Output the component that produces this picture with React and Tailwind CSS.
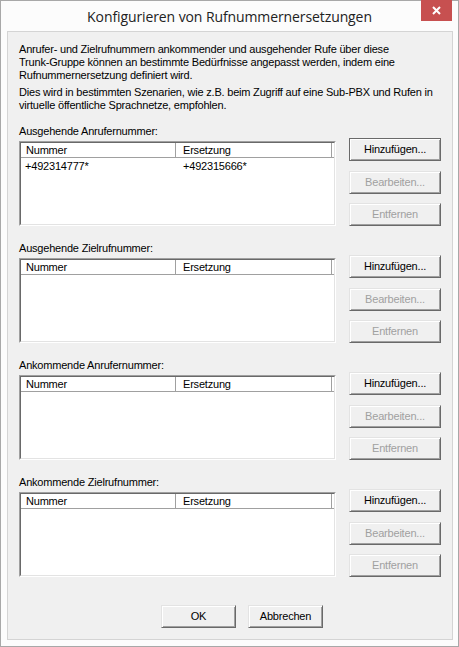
import clsx from 'clsx';

const sections = [
  {
    label: 'Ausgehende Anrufernummer:',
    rows: [{ nummer: '+492314777*', ersetzung: '+492315666*' }],
    isDefault: true,
  },
  { label: 'Ausgehende Zielrufnummer:', rows: [] },
  { label: 'Ankommende Anrufernummer:', rows: [] },
  { label: 'Ankommende Zielrufnummer:', rows: [] },
];

// Classic 3D push button
function DialogButton({ children, disabled, isDefault, className }) {
  return (
    <button
      type="button"
      disabled={disabled}
      className={clsx(
        'h-[23px] bg-[#f0f0f0] text-[11px] leading-none tracking-[-0.2px] border',
        isDefault
          ? 'border-[#6a6a6a] shadow-[inset_1px_1px_0_#ffffff,inset_-1px_-1px_0_#a0a0a0]'
          : 'border-t-[#e3e3e3] border-l-[#e3e3e3] border-r-[#696969] border-b-[#696969] shadow-[inset_1px_1px_0_#ffffff,inset_-1px_-1px_0_#a0a0a0]',
        disabled ? 'text-[#a0a0a0]' : 'text-black',
        className
      )}
    >
      {children}
    </button>
  );
}

// Two-column report list with sunken frame
function NumberList({ rows }) {
  return (
    <div className="w-[317px] h-[85px] border border-t-[#a0a0a0] border-l-[#a0a0a0] border-r-white border-b-white">
      <div className="h-full bg-white border border-t-[#696969] border-l-[#696969] border-r-[#e3e3e3] border-b-[#e3e3e3]">
        <div className="flex h-[15px] border-b border-[#a0a0a0] leading-[14px]">
          <div className="w-[155px] pl-[5px] border-r border-[#a0a0a0]">Nummer</div>
          <div className="w-[156px] pl-[7px] border-r border-[#a0a0a0]">Ersetzung</div>
        </div>
        {rows.map((row) => (
          <div key={row.nummer} className="flex h-[17px] items-center">
            <div className="w-[155px] pl-[4px]">{row.nummer}</div>
            <div className="w-[156px] pl-[7px]">{row.ersetzung}</div>
          </div>
        ))}
      </div>
    </div>
  );
}

export default function App() {
  return (
    <div className="relative w-[459px] h-[647px] bg-[#fcfcfc] border border-[#a8a8a8] font-['Liberation_Sans',Arial,sans-serif] text-[11px] text-black">
      {/* title bar */}
      <div className="h-[30px] flex items-center justify-center">
        <span className="font-['Open_Sans',sans-serif] text-[14px] text-[#222222] tracking-[-0.1px]">
          Konfigurieren von Rufnummernersetzungen
        </span>
      </div>
      <div className="absolute top-[-1px] right-[6px] w-[31px] h-[21px] bg-[#c75050] flex items-center justify-center">
        <svg width="9" height="9" viewBox="0 0 9 9">
          <path d="M1 1 L8 8 M8 1 L1 8" stroke="#ffffff" strokeWidth="2" />
        </svg>
      </div>

      {/* client area */}
      <div className="ml-[6px] w-[446px] h-[609px] bg-[#f0f0f0] border border-[#d4d4d4] pl-[11px] pt-[11px] tracking-[-0.2px]">
        <div className="leading-[13px] whitespace-nowrap">
          <div>Anrufer- und Zielrufnummern ankommender und ausgehender Rufe über diese</div>
          <div>Trunk-Gruppe können an bestimmte Bedürfnisse angepasst werden, indem eine</div>
          <div>Rufnummernersetzung definiert wird.</div>
        </div>
        <div className="mt-[4px] leading-[13px] whitespace-nowrap">
          <div>Dies wird in bestimmten Szenarien, wie z.B. beim Zugriff auf eine Sub-PBX und Rufen in</div>
          <div>virtuelle öffentliche Sprachnetze, empfohlen.</div>
        </div>

        <div className="mt-[13px] flex flex-col gap-[16px]">
          {sections.map((section) => (
            <div key={section.label} className="flex">
              <div>
                <div className="h-[13px] leading-[13px]">{section.label}</div>
                <div className="mt-[3px]">
                  <NumberList rows={section.rows} />
                </div>
              </div>
              <div className="ml-[13px] mt-[13px] flex flex-col">
                <DialogButton className="w-[92px]" isDefault={section.isDefault}>
                  Hinzufügen...
                </DialogButton>
                <DialogButton className="w-[92px] mt-[10px]" disabled>
                  Bearbeiten...
                </DialogButton>
                <DialogButton className="w-[92px] mt-[9px]" disabled>
                  Entfernen
                </DialogButton>
              </div>
            </div>
          ))}
        </div>

        <div className="mt-[28px] ml-[142px] flex gap-[12px]">
          <DialogButton className="w-[75px]">OK</DialogButton>
          <DialogButton className="w-[75px]">Abbrechen</DialogButton>
        </div>
      </div>
    </div>
  );
}
